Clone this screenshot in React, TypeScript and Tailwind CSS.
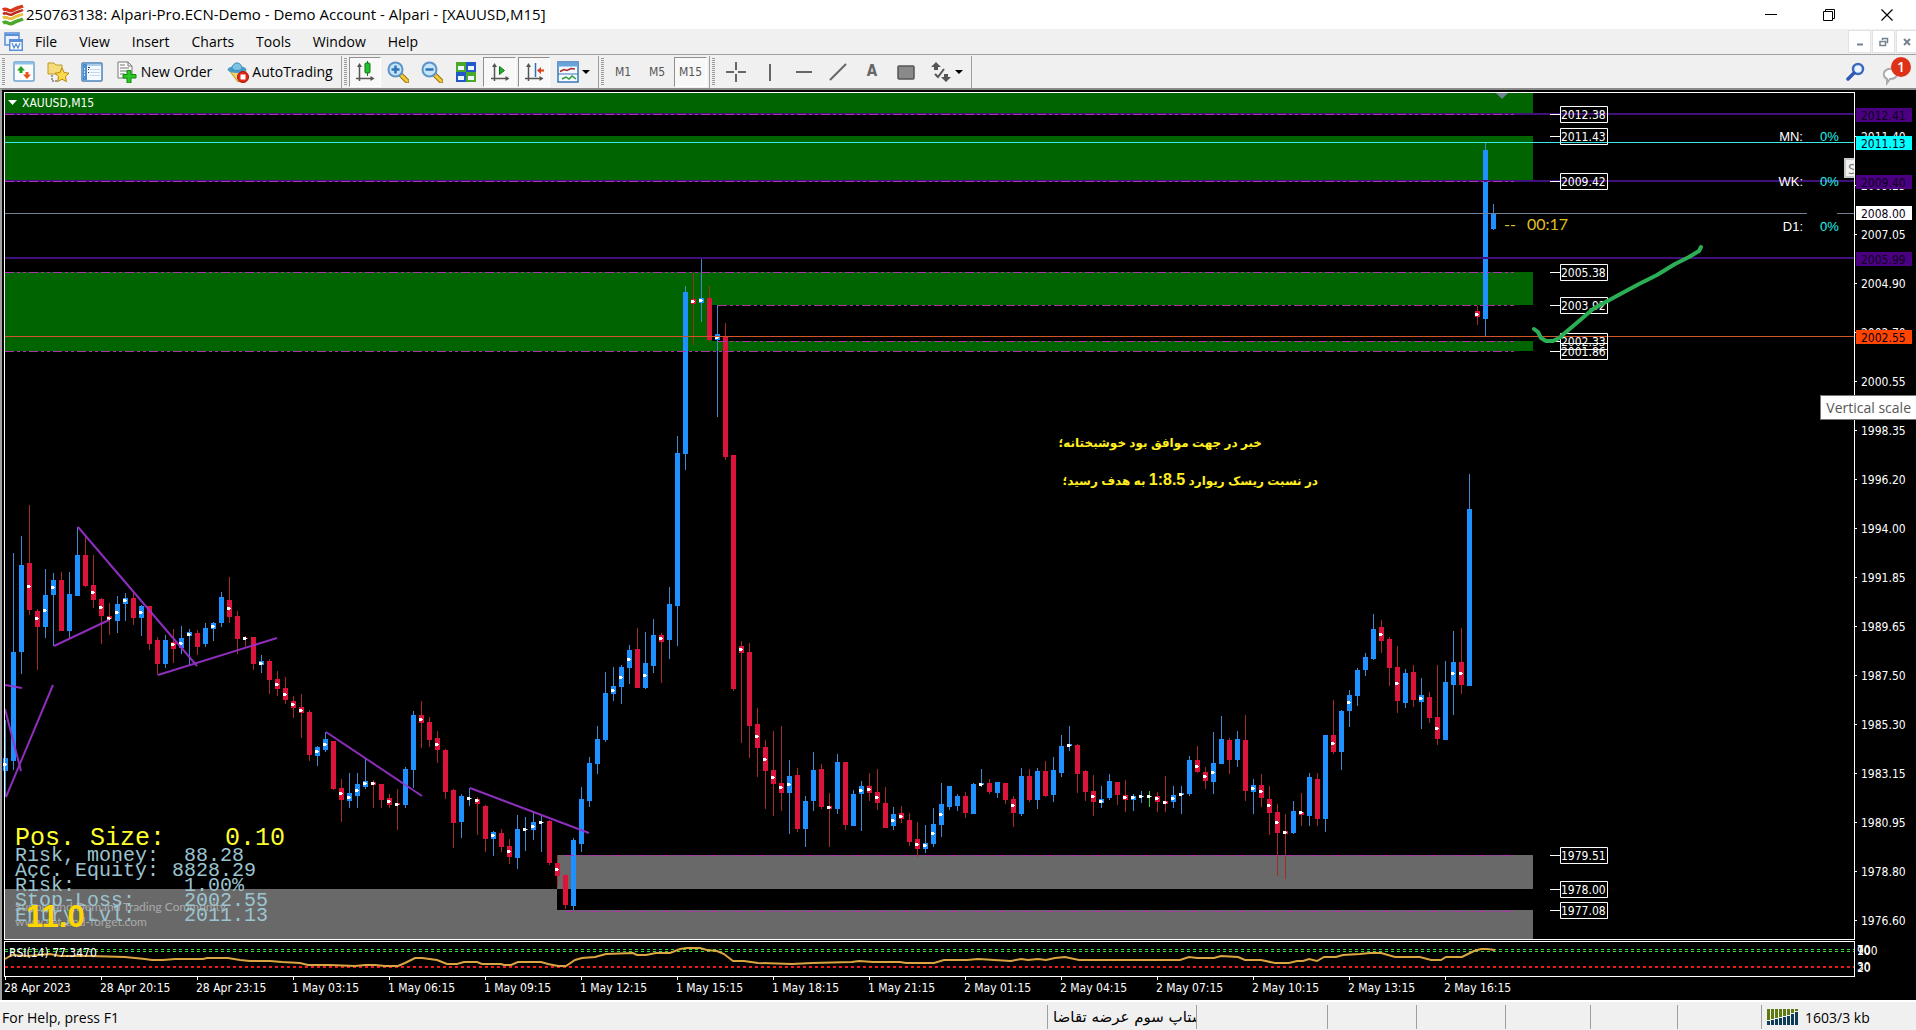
import type { ReactNode } from "react";

// [high, body top, body bottom, low, direction, marker y]
type Candle = [number, number, number, number, "u" | "d" | "n", number?];

const CANDLES: Candle[] = [
  [720, 758, 771, 797, "u", 764],
  [553, 652, 761, 770, "u"],
  [536, 565, 652, 674, "u"],
  [505, 563, 610, 615, "d", 586],
  [609, 611, 627, 670, "d", 618],
  [569, 595, 627, 638, "u", 610],
  [573, 580, 595, 646, "u", 587],
  [572, 580, 631, 631, "d"],
  [572, 594, 631, 638, "u"],
  [527, 555, 596, 596, "u"],
  [536, 555, 586, 587, "d"],
  [555, 585, 600, 608, "d", 592],
  [598, 599, 616, 644, "d", 607],
  [603, 616, 619, 635, "d", 618],
  [596, 604, 621, 633, "u", 612],
  [593, 598, 604, 621, "u", 600],
  [592, 598, 618, 625, "d"],
  [605, 606, 618, 636, "u", 612],
  [606, 606, 644, 650, "d"],
  [637, 640, 664, 675, "d"],
  [635, 640, 664, 668, "u"],
  [629, 642, 649, 663, "d", 644],
  [626, 638, 648, 654, "u", 643],
  [629, 632, 636, 665, "u", 634],
  [630, 633, 647, 655, "d"],
  [623, 628, 644, 647, "u"],
  [622, 623, 629, 641, "u", 626],
  [592, 597, 623, 627, "u"],
  [577, 600, 617, 623, "d", 608],
  [611, 616, 639, 654, "d"],
  [636, 638, 639, 647, "d", 638],
  [637, 637, 664, 670, "d"],
  [655, 661, 665, 673, "u", 663],
  [659, 661, 680, 694, "d"],
  [671, 679, 689, 696, "d", 684],
  [677, 688, 700, 704, "d", 694],
  [696, 701, 708, 718, "d", 704],
  [694, 707, 713, 738, "d", 710],
  [710, 712, 755, 761, "d"],
  [746, 747, 756, 766, "u", 751],
  [732, 739, 750, 752, "u", 744],
  [741, 741, 789, 790, "d"],
  [779, 788, 800, 822, "d", 793],
  [773, 793, 801, 808, "u", 797],
  [773, 784, 796, 808, "u", 790],
  [759, 781, 787, 789, "u", 783],
  [780, 782, 785, 808, "d", 783],
  [784, 784, 800, 808, "d"],
  [794, 798, 805, 808, "d", 801],
  [789, 803, 805, 830, "d", 804],
  [767, 769, 805, 808, "u"],
  [711, 715, 770, 788, "u"],
  [701, 715, 723, 748, "d", 719],
  [717, 722, 740, 747, "d"],
  [731, 738, 750, 763, "d", 744],
  [749, 750, 792, 799, "d"],
  [789, 790, 823, 848, "d"],
  [794, 796, 822, 838, "u"],
  [788, 798, 799, 806, "u", 798],
  [797, 799, 804, 835, "d", 800],
  [805, 806, 839, 852, "d"],
  [831, 832, 839, 856, "u", 835],
  [829, 833, 847, 852, "d"],
  [839, 846, 857, 864, "d", 851],
  [815, 829, 858, 869, "u"],
  [817, 829, 830, 851, "u", 829],
  [812, 822, 830, 840, "u", 826],
  [816, 822, 823, 852, "u", 822],
  [820, 821, 863, 865, "d"],
  [855, 863, 876, 887, "d", 869],
  [875, 875, 905, 909, "d"],
  [838, 840, 906, 910, "u"],
  [787, 799, 844, 852, "u"],
  [757, 763, 801, 807, "u"],
  [726, 739, 764, 774, "u"],
  [672, 693, 740, 742, "u"],
  [667, 686, 694, 701, "u", 690],
  [665, 667, 687, 704, "u", 677],
  [645, 650, 668, 684, "u", 659],
  [628, 649, 688, 688, "d"],
  [632, 663, 688, 689, "u", 675],
  [619, 635, 666, 673, "u"],
  [633, 635, 642, 683, "d", 638],
  [587, 604, 640, 659, "u"],
  [436, 453, 606, 646, "u"],
  [286, 292, 454, 470, "u"],
  [273, 299, 304, 345, "d", 301],
  [259, 298, 303, 322, "u", 300],
  [286, 298, 340, 342, "d"],
  [305, 334, 340, 417, "u", 337],
  [323, 336, 457, 460, "d"],
  [455, 455, 689, 691, "d"],
  [641, 646, 653, 743, "d", 649],
  [643, 652, 726, 758, "d"],
  [708, 724, 748, 777, "d", 736],
  [740, 747, 771, 809, "d", 759],
  [731, 770, 784, 816, "d", 777],
  [726, 783, 793, 811, "d", 787],
  [760, 776, 793, 834, "u", 784],
  [768, 775, 829, 832, "d"],
  [796, 801, 829, 847, "u"],
  [752, 770, 801, 811, "u"],
  [764, 769, 807, 809, "d"],
  [793, 806, 809, 847, "d", 807],
  [754, 762, 809, 814, "u"],
  [762, 762, 825, 830, "d"],
  [790, 794, 826, 826, "u"],
  [781, 786, 794, 831, "u", 790],
  [773, 786, 793, 801, "d", 789],
  [769, 792, 803, 810, "d", 797],
  [787, 803, 828, 828, "d"],
  [807, 814, 826, 830, "u", 820],
  [806, 813, 819, 823, "d", 816],
  [813, 820, 842, 846, "d"],
  [822, 839, 849, 857, "d", 844],
  [825, 843, 849, 853, "u", 845],
  [808, 824, 844, 847, "u", 833],
  [783, 804, 825, 837, "u", 814],
  [786, 786, 807, 810, "u"],
  [794, 796, 806, 811, "u"],
  [792, 796, 813, 818, "d"],
  [783, 784, 814, 814, "u"],
  [769, 783, 785, 787, "u", 784],
  [779, 783, 792, 794, "d"],
  [782, 782, 793, 798, "u"],
  [783, 783, 800, 804, "d"],
  [796, 799, 813, 827, "d", 805],
  [768, 776, 814, 816, "u"],
  [769, 776, 800, 802, "d"],
  [768, 771, 800, 809, "u"],
  [761, 771, 796, 797, "d"],
  [757, 770, 795, 802, "u"],
  [735, 746, 773, 777, "u"],
  [726, 744, 746, 751, "u", 745],
  [744, 745, 774, 793, "d"],
  [770, 771, 792, 801, "d"],
  [775, 791, 802, 816, "d", 796],
  [786, 799, 803, 808, "u", 801],
  [774, 781, 798, 800, "u"],
  [782, 782, 795, 805, "d"],
  [780, 795, 800, 812, "d", 797],
  [794, 796, 800, 811, "u", 797],
  [791, 796, 797, 803, "u", 796],
  [791, 796, 797, 807, "n", 796],
  [792, 796, 802, 812, "d", 798],
  [776, 801, 804, 812, "d", 802],
  [786, 795, 802, 808, "u", 798],
  [786, 793, 795, 814, "u", 794],
  [756, 760, 794, 796, "u"],
  [746, 760, 772, 773, "d", 766],
  [767, 772, 781, 789, "d", 776],
  [732, 763, 782, 794, "u", 772],
  [716, 739, 764, 764, "u"],
  [738, 740, 760, 774, "d"],
  [731, 739, 760, 767, "u"],
  [715, 740, 791, 801, "d"],
  [779, 785, 792, 814, "u", 788],
  [774, 785, 798, 807, "d", 791],
  [786, 799, 813, 835, "d", 805],
  [804, 812, 833, 876, "d", 822],
  [814, 831, 834, 879, "d", 832],
  [801, 811, 833, 834, "u"],
  [793, 812, 815, 826, "d", 812],
  [773, 777, 816, 826, "u"],
  [773, 779, 819, 826, "d"],
  [735, 735, 819, 832, "u"],
  [700, 735, 752, 754, "d", 743],
  [710, 711, 752, 770, "u"],
  [690, 695, 711, 727, "u", 702],
  [668, 670, 696, 706, "u"],
  [653, 657, 670, 676, "u"],
  [614, 629, 659, 660, "u"],
  [620, 627, 641, 653, "d", 634],
  [637, 639, 668, 686, "d"],
  [646, 667, 701, 713, "d", 683],
  [669, 673, 703, 708, "u"],
  [665, 672, 700, 707, "d"],
  [678, 695, 702, 729, "u", 698],
  [692, 697, 718, 723, "d"],
  [665, 717, 739, 745, "d", 728],
  [661, 682, 740, 740, "u"],
  [631, 662, 685, 715, "u", 673],
  [628, 662, 685, 694, "d", 673],
  [474, 509, 686, 686, "u"],
  [306, 311, 317, 325, "d", 314],
  [143, 150, 319, 336, "u"],
  [204, 213, 229, 230, "u"],
];

const BODY = { u: "#1e90ff", d: "#dc143c", n: "#32cd32" };
const WICK = { u: "#4287cf", d: "#a52a2a", n: "#32cd32" };

const ZONES = [
  { x: 5, y: 93, w: 1528, h: 20, fill: "#006400" },
  { x: 5, y: 136, w: 1528, h: 44, fill: "#006400" },
  { x: 5, y: 272, w: 707, h: 79, fill: "#006400" },
  { x: 712, y: 272, w: 821, h: 33, fill: "#006400" },
  { x: 712, y: 341, w: 821, h: 10, fill: "#006400" },
  { x: 5, y: 889, w: 552, h: 50, fill: "#696969" },
  { x: 557, y: 855, w: 976, h: 34, fill: "#696969" },
  { x: 557, y: 910, w: 976, h: 29, fill: "#696969" },
];

const LEVELS = [
  { x: 5, y: 114 },
  { x: 5, y: 181 },
  { x: 5, y: 272 },
  { x: 718, y: 305 },
  { x: 718, y: 341 },
  { x: 5, y: 351 },
  { x: 565, y: 855 },
  { x: 565, y: 911 },
];

const PRICE_BOXES: [string, number][] = [
  ["2012.38", 114],
  ["2011.43", 136],
  ["2009.42", 181],
  ["2005.38", 272],
  ["2003.92", 305],
  ["2002.33", 341],
  ["2001.86", 351],
  ["1979.51", 855],
  ["1978.00", 889],
  ["1977.08", 910],
];

const TREND_LINES = [
  "78,527 197,666",
  "54,646 109,620",
  "158,675 277,638",
  "5,685 22,688",
  "5,709 21,771",
  "6,797 53,685",
  "326,732 422,796",
  "470,788 589,833",
];

const SCALE = [
  "2011.40", "2009.25", "2007.05", "2004.90", "2002.70", "2000.55", "1998.35", "1996.20", "1994.00",
  "1991.85", "1989.65", "1987.50", "1985.30", "1983.15", "1980.95", "1978.80", "1976.60",
];

const TAGS = [
  { price: "2012.41", y: 115, bg: "#4b0082" },
  { price: "2011.13", y: 143, bg: "#00ffff" },
  { price: "2009.40", y: 182, bg: "#4b0082" },
  { price: "2008.00", y: 213, bg: "#ffffff" },
  { price: "2005.99", y: 259, bg: "#4b0082" },
  { price: "2002.55", y: 337, bg: "#ff4500" },
];

const TIMES = [
  "28 Apr 2023", "28 Apr 20:15", "28 Apr 23:15", "1 May 03:15", "1 May 06:15", "1 May 09:15",
  "1 May 12:15", "1 May 15:15", "1 May 18:15", "1 May 21:15", "2 May 01:15", "2 May 04:15",
  "2 May 07:15", "2 May 10:15", "2 May 13:15", "2 May 16:15",
];

const RSI =
  "5,959 12,955 28,956 50,954 60,956 90,956 125,957 145,959 152,960 163,960 175,959 203,959 207,958 228,958 240,960 250,961 270,961 282,962 300,963 308,965 330,965 355,966 365,965 375,965 385,966 398,966 405,963 415,958 422,958 437,960 447,964 457,964 464,962 477,962 482,964 501,964 504,965 511,965 518,962 541,962 548,964 558,966 566,966 575,960 582,958 595,957 606,954 633,953 637,955 646,955 656,953 670,953 680,949 687,948 700,948 707,950 717,951 724,954 733,961 744,961 758,963 792,964 812,963 852,962 859,961 873,962 900,962 906,963 934,963 944,960 967,960 978,959 1011,961 1021,959 1028,960 1038,959 1046,960 1055,958 1065,957 1079,960 1180,960 1189,957 1197,958 1214,958 1221,956 1238,957 1245,960 1261,960 1275,963 1289,963 1297,961 1303,961 1309,959 1317,961 1324,957 1336,957 1343,955 1360,954 1370,953 1381,953 1395,957 1420,957 1431,960 1441,960 1446,957 1462,957 1474,951 1481,949 1487,949 1495,950";

const INFO: [string, string, number, number][] = [
  ["Risk, money:", "88.28", 184, 861],
  ["Acc. Equity:", "8828.29", 172, 876],
  ["Risk:", "1.00%", 184, 891],
  ["Stop-Loss:", "2002.55", 184, 906],
  ["Entry Lvl:", "2011.13", 184, 921],
];

const LABEL = "font-['DejaVu_Sans_Condensed','DejaVu_Sans',sans-serif] text-[12px]";

function Candles() {
  return (
    <g shapeRendering="crispEdges">
      {CANDLES.map(([high, top, bottom, low, dir, dot], i) => {
        const x = 5 + i * 8;
        return (
          <g key={i}>
            <rect x={x} y={high} width={1} height={Math.max(low - high, 1)} fill={WICK[dir]} />
            <rect x={x - 2} y={top} width={5} height={bottom - top} fill={BODY[dir]} />
            {dot && (
              <>
                <rect x={x - 2} y={dot - 1} width={3} height={3} fill="#fff" />
                <rect x={x - 2} y={dot} width={4} height={1} fill="#fff" />
              </>
            )}
          </g>
        );
      })}
    </g>
  );
}

function Plot() {
  return (
    <svg className="h-full min-w-0 flex-1" role="img" aria-label="XAUUSD M15 candlestick chart">
      <g transform="translate(-2,-90)">
        <g shapeRendering="crispEdges">
          {ZONES.map((z, i) => (
            <rect key={i} x={z.x} y={z.y} width={z.w} height={z.h} fill={z.fill} />
          ))}
        </g>

        {/* Watermark */}
        <g className="font-['Lato',sans-serif] text-[12px]" fill="#a9a9a9">
          <text x={15} y={911}>Supply and Demand Trading Community</text>
          <text x={15} y={926}>www.set-and-forget.com</text>
        </g>

        <Candles />

        <g stroke="#9932cc" strokeWidth={2} opacity={0.92}>
          {TREND_LINES.map((points) => (
            <polyline key={points} points={points} />
          ))}
        </g>

        {/* Horizontal price lines */}
        <g shapeRendering="crispEdges">
          {[113, 180, 257].map((y) => (
            <rect key={y} x={5} y={y} width="100%" height={2} fill="#42107a" />
          ))}
          {LEVELS.map((l) => (
            <line key={l.y} x1={l.x} x2={1514} y1={l.y + 0.5} y2={l.y + 0.5} stroke="#b030b0" strokeDasharray="9 3 3 3 3 3" />
          ))}
          <rect x={5} y={142} width="100%" height={1} fill="#38ece4" />
          <rect x={5} y={213} width={1802} height={1} fill="#708090" />
          <rect x={1837} y={213} width={100} height={1} fill="#708090" />
          <rect x={5} y={336} width="100%" height={1} fill="#d2552a" />
        </g>
        <path d="M1496 93h12l-6 6z" fill="#708090" />

        {/* Price labels */}
        <g className={LABEL} fill="#fff">
          {PRICE_BOXES.map(([price, y]) => (
            <g key={price}>
              <path d={`M1550 ${y + 0.5}h10M1560.5 ${y - 7.5}h47v16h-47z`} fill="none" stroke="#fff" />
              <text x={1561} y={y + 5}>{price}</text>
            </g>
          ))}
        </g>

        <g className="font-['Liberation_Sans',sans-serif] text-[13px]">
          {[["MN:", 141], ["WK:", 186], ["D1:", 231]].map(([name, y]) => (
            <g key={name}>
              <text x={1803} y={y} textAnchor="end" fill="#fff">{name}</text>
              <text x={1820} y={y} fill="#20f4ec">0%</text>
            </g>
          ))}
        </g>

        <g className="font-['Lato',sans-serif] text-[16px]" fill="#e0c020">
          <text x={1504} y={230}>--</text>
          <text x={1527} y={230}>00:17</text>
        </g>

        <path
          d="M1534 329l4 3 3 6 5 3h7l6-3 20-17 14-12 20-11 26-14 18-9 18-11 14-7 10-6 2-4"
          fill="none"
          stroke="#2bae54"
          strokeWidth={4}
          strokeLinecap="round"
          strokeLinejoin="round"
        />

        <g className="font-['Liberation_Sans','DejaVu_Sans',sans-serif] text-[12px] font-bold" fill="#ffee20" direction="rtl">
          <text x={1262} y={447}>خبر در جهت موافق بود خوشبختانه؛</text>
          <text x={1318} y={485}>
            در نسبت ریسک ریوارد <tspan className="text-[16px]">1:8.5</tspan> به هدف رسید؛
          </text>
        </g>

        {/* Position size panel */}
        <g className="font-['Liberation_Mono',monospace]">
          <g className="text-[25px]" fill="#ffff30">
            <text x={15} y={845}>Pos. Size:</text>
            <text x={225} y={845}>0.10</text>
          </g>
          <g className="text-[20px]" fill="#9cc4d0">
            {INFO.map(([name, value, x, y]) => (
              <g key={name}>
                <text x={15} y={y}>{name}</text>
                <text x={x} y={y}>{value}</text>
              </g>
            ))}
          </g>
        </g>
        <text x={26} y={927} className="font-['Liberation_Sans',sans-serif] text-[31px] font-bold" fill="#ffd700">11.0</text>

        <path d="M8 100h9l-4.5 5z" fill="#fff" />
        <text x={22} y={107} className={LABEL} fill="#fff">XAUUSD,M15</text>

        {/* RSI window */}
        <g shapeRendering="crispEdges">
          <path d="M5 949.5H1900M5 951.5H1900" stroke="#3cdc3c" strokeDasharray="3 3" />
          <path d="M5 967H1900" stroke="#f01818" strokeWidth={2} strokeDasharray="3 3" />
        </g>
        <polyline points={RSI} fill="none" stroke="#daa540" strokeWidth={2} />
        <text x={9} y={957} className={LABEL} fill="#fff">RSI(14) 77.3470</text>

        {/* Window frames */}
        <g fill="#fff" shapeRendering="crispEdges">
          <rect x={4} y={92} width="100%" height={1} />
          <rect x={4} y={92} width={1} height={848} />
          <rect x={4} y={939} width="100%" height={1} />
          <rect x={4} y={941} width="100%" height={1} />
          <rect x={4} y={941} width={1} height={36} />
          <rect x={4} y={976} width="100%" height={1} />
        </g>

        <g className={LABEL} fill="#fff">
          {TIMES.map((time, i) => (
            <g key={time}>
              <rect x={5 + i * 96} y={977} width={1} height={3} />
              <text x={4 + i * 96} y={992}>{time}</text>
            </g>
          ))}
        </g>
      </g>
    </svg>
  );
}

function PriceScale() {
  return (
    <svg className="h-full w-[62px] shrink-0" role="img" aria-label="Vertical scale">
      <g transform="translate(-1854,-90)" className={LABEL} fill="#fff">
        <path d="M1854.5 92V940M1854.5 941V977" stroke="#fff" />
        {SCALE.map((price, i) => (
          <g key={price}>
            <rect x={1855} y={136 + i * 49} width={2} height={1} />
            <text x={1861} y={141 + i * 49}>{price}</text>
          </g>
        ))}
        {TAGS.map((tag) => (
          <g key={tag.price}>
            <rect x={1856} y={tag.y - 7} width={56} height={14} fill={tag.bg} />
            <text x={1861} y={tag.y + 5} fill="#0c0018">{tag.price}</text>
          </g>
        ))}
        <text x={1857} y={955}>100</text>
        <text x={1857} y={955}>90</text>
        <text x={1857} y={954}>70</text>
        <text x={1857} y={971}>30</text>
        <text x={1857} y={972}>20</text>
      </g>
    </svg>
  );
}

function Grip() {
  return <span className="mx-[2px] h-[28px] w-[3px] shrink-0 bg-[repeating-linear-gradient(#9a9a9a_0_1px,#f0f0f0_1px_2px)]" />;
}

function Divider() {
  return <span className="h-[32px] w-px shrink-0 bg-[#a0a0a0]" />;
}

function Tool({ label, pressed, className = "w-[34px]", children }: { label: string; pressed?: boolean; className?: string; children: ReactNode }) {
  return (
    <button
      type="button"
      aria-label={label}
      aria-pressed={pressed}
      className={`flex h-[30px] shrink-0 items-center justify-center gap-[3px] border ${pressed ? "border-t-[#909090] border-r-white border-b-white border-l-[#909090] bg-[#f8f8f8]" : "border-transparent"} ${className}`}
    >
      {children}
    </button>
  );
}

function Icon({ children, size = 22 }: { children: ReactNode; size?: number }) {
  return (
    <svg width={size} height={size} viewBox={`0 0 ${size} ${size}`} fill="none" className="shrink-0" aria-hidden="true">
      {children}
    </svg>
  );
}

function Magnifier({ plus }: { plus?: boolean }) {
  return (
    <Icon>
      <path d="M14 14l6 6" stroke="#9a7410" strokeWidth={5} strokeLinecap="round" />
      <path d="M14 14l6 6" stroke="#f0c838" strokeWidth={3} strokeLinecap="round" />
      <circle cx={8.5} cy={8.5} r={7} fill="#c5e6fa" stroke="#5b94c8" strokeWidth={2} />
      <path d={plus ? "M4.5 8.5h8M8.5 4.5v8" : "M4.5 8.5h8"} stroke="#2f72b5" strokeWidth={2.5} />
    </Icon>
  );
}

function Axes({ children }: { children?: ReactNode }) {
  return (
    <Icon>
      <path d="M5.5 4v16M2 17.5h17" stroke="#555" strokeWidth={1.5} />
      <path d="M3 6l2.500-4L8 6zM16.500 15l4 2.500-4 2.500z" fill="#555" />
      {children}
    </Icon>
  );
}

function Caret() {
  return (
    <Icon size={8}>
      <path d="M0 2h8L4 6z" fill="#000" />
    </Icon>
  );
}

function Toolbar() {
  return (
    <div className="flex h-[34px] shrink-0 items-center border-t border-t-[#a0a0a0] bg-[#f0f0f0] text-[14px]">
      <Grip />
      <Tool label="New chart">
        <Icon>
          <rect x={1} y={1} width={20} height={19} rx={1} fill="#fdfdfd" stroke="#6aa0d0" strokeWidth={1.5} />
          <path d="M1 2.5h20" stroke="#8fc0e8" strokeWidth={2} />
          <path d="M4 9.5L8 5l4 4.5H9.5V12h-3V9.5z" fill="#23a31c" />
          <path d="M10 13.5l4 4.5 4-4.5h-2.5V11h-3v2.5z" fill="#e8551c" />
        </Icon>
      </Tool>
      <Tool label="Profiles">
        <Icon>
          <path d="M1 2h6l2 2h6v9H1z" fill="#f5dc7a" stroke="#c09a28" />
          <path d="M5 14v6h6" stroke="#444" strokeDasharray="2 1" />
          <path d="M15 7l2.200 4.600 4.800.6-3.500 3.400.9 5-4.400-2.400-4.400 2.400.9-5L8 12.200l4.800-.6z" fill="#fbd94a" stroke="#b88710" />
        </Icon>
      </Tool>
      <Tool label="Market watch">
        <Icon>
          <rect x={1} y={2} width={20} height={18} rx={1} fill="#f4faff" stroke="#4a82b8" strokeWidth={1.5} />
          <path d="M2 4h18" stroke="#a8ccec" strokeWidth={2} />
          <rect x={2} y={3} width={4} height={16} fill="#4a8fd4" />
          <path d="M3 8h1M3 11h1M3 14h1" stroke="#fff" strokeWidth={1.5} />
          <path d="M9 8.5h10M9 11.5h10M9 14.5h10" stroke="#c4d8ec" />
          <path d="M7 6.5h2M7 8.5h1M7 11.5h1" stroke="#2a3a50" />
        </Icon>
      </Tool>
      <Tool label="New Order" className="w-[110px]">
        <Icon>
          <path d="M2 1h10l4 4v12H2z" fill="#fdfdfd" stroke="#777" />
          <path d="M12 1v4h4M4 4h5M4 7h9M4 10h9M4 13h5" stroke="#777" />
          <path d="M11 22v-5H7v-3.5h4V9.5h4v4h5V17h-5v5z" fill="#2dc626" stroke="#0f8a0c" />
        </Icon>
        <span className="whitespace-nowrap">New Order</span>
      </Tool>
      <Tool label="AutoTrading" className="w-[122px]">
        <Icon>
          <path d="M2 9l17 1-2 9-6 2z" fill="#f2d466" stroke="#b8932a" />
          <ellipse cx={10} cy={8.5} rx={9.5} ry={3.5} fill="#4a9cc8" />
          <path d="M5 8c0-8 10-8 10 0-3 2-7 2-10 0z" fill="#7cc4e4" stroke="#3a86b0" />
          <circle cx={16} cy={16} r={5.5} fill="#e02a18" stroke="#a81408" />
          <rect x={13.5} y={13.5} width={5} height={5} fill="#fff" />
        </Icon>
        <span className="whitespace-nowrap">AutoTrading</span>
      </Tool>
      <Divider />
      <Grip />
      <Tool label="Candlesticks" pressed className="w-[32px]">
        <Axes>
          <path d="M13.5 0v15" stroke="#0b7a12" />
          <rect x={11} y={2} width={5} height={10} rx={1} fill="#22c02c" stroke="#0b7a12" />
        </Axes>
      </Tool>
      <Tool label="Zoom in"><Magnifier plus /></Tool>
      <Tool label="Zoom out"><Magnifier /></Tool>
      <Tool label="Tile windows">
        <Icon>
          <rect x={1} y={1} width={10} height={10} fill="#4aa82a" />
          <rect x={11} y={1} width={10} height={10} fill="#2458c8" />
          <rect x={1} y={11} width={10} height={10} fill="#2458c8" />
          <rect x={11} y={11} width={10} height={10} fill="#4aa82a" />
          <path d="M3 5h6v4H3zM13 5h6v4h-6zM3 15h6v4H3zM13 15h6v4h-6z" fill="#eef6ff" />
        </Icon>
      </Tool>
      <Tool label="Auto scroll" pressed className="w-[33px]">
        <Axes>
          <path d="M10.5 5.5v8l5-4z" fill="#22b02c" stroke="#0b7a12" />
        </Axes>
      </Tool>
      <Tool label="Chart shift" pressed className="ml-[2px] w-[32px]">
        <Axes>
          <path d="M12.5 2v14" stroke="#2f72b5" strokeWidth={1.5} />
          <path d="M14 9.5l4-3.5v2.5h3v2h-3V13z" fill="#d8401c" />
        </Axes>
      </Tool>
      <Tool label="Templates" className="w-[46px]">
        <Icon>
          <rect x={1} y={1} width={20} height={20} fill="#f4faff" stroke="#3b78b8" strokeWidth={1.5} />
          <path d="M1 3.5h20" stroke="#6aa4dc" strokeWidth={4} />
          <path d="M1 13h20" stroke="#3b78b8" />
          <path d="M3 10.5l4-2 3 1 4-2 4 .5" stroke="#a82a20" strokeWidth={1.5} />
          <path d="M5 18l4-2 3 2 3-3 4 3" stroke="#2a9a3a" strokeWidth={1.5} />
        </Icon>
        <Caret />
      </Tool>
      <span className="w-[2px] shrink-0" />
      <Divider />
      <Grip />
      <div className="flex font-['DejaVu_Sans_Condensed','DejaVu_Sans',sans-serif] text-[12px] text-[#555]">
        <Tool label="M1">M1</Tool>
        <Tool label="M5">M5</Tool>
        <Tool label="M15" pressed className="w-[33px]">M15</Tool>
      </div>
      <span className="w-[2px] shrink-0" />
      <Divider />
      <Grip />
      <div className="flex items-center pl-[2px]">
        <Tool label="Crosshair"><Icon><path d="M11 1v8M11 13v8M1 11h8M13 11h8" stroke="#666" strokeWidth={2} /></Icon></Tool>
        <Tool label="Vertical line"><Icon><path d="M11 3v17" stroke="#666" strokeWidth={2} /></Icon></Tool>
        <Tool label="Horizontal line"><Icon><path d="M3 11h16" stroke="#666" strokeWidth={2} /></Icon></Tool>
        <Tool label="Trend line"><Icon><path d="M3 19L19 3" stroke="#666" strokeWidth={2} /></Icon></Tool>
        <Tool label="Text">
          <span className="font-['DejaVu_Sans_Condensed','DejaVu_Sans',sans-serif] text-[15px] font-bold text-[#666]">A</span>
        </Tool>
        <Tool label="Rectangle">
          <Icon><rect x={3} y={5} width={16} height={13} rx={1} fill="#8a8a8a" stroke="#555" strokeWidth={1.5} /></Icon>
        </Tool>
        <Tool label="Arrows" className="w-[46px]">
          <Icon>
            <path d="M1 6l5-5 5 5H8v3H4V6zM11 16l5 5 5-5h-3v-3h-4v3z" fill="#555" />
            <path d="M5 13l3 3 6-8" stroke="#555" strokeWidth={2} />
          </Icon>
          <Caret />
        </Tool>
      </div>
      <span className="w-[2px] shrink-0" />
      <Divider />
      <div className="ml-auto flex items-center gap-[12px]">
        <Tool label="Search" className="w-[24px]">
          <Icon size={20}>
            <circle cx={12} cy={7} r={5} fill="#eaf4ff" stroke="#3a6ac0" strokeWidth={2.5} />
            <path d="M8 11l-6 6" stroke="#2f5ab0" strokeWidth={3.5} strokeLinecap="round" />
          </Icon>
        </Tool>
        <button type="button" aria-label="Notifications" className="relative h-[30px] w-[36px]">
          <Icon size={28}>
            <path d="M5 13c3-3 11-3 12 1 1 5-3 7-7 7l-3 4v-4c-4-2-4-6-2-8z" fill="#fff" stroke="#aaa" strokeWidth={2} />
          </Icon>
          <span className="absolute top-0 right-[5px] flex size-[20px] items-center justify-center rounded-full bg-[#de3218] text-[14px] font-semibold text-white">1</span>
        </button>
      </div>
    </div>
  );
}

function TitleBar() {
  return (
    <header className="flex h-[29px] shrink-0 items-center bg-white">
      <div className="flex w-[26px] shrink-0 justify-center">
        <Icon size={22}>
          <path d="M1 6c4-3 6 3 10 0s6-2 10-4" stroke="#d8371c" strokeWidth={3.5} />
          <path d="M1 10c4-3 6 3 10 0s6-2 10-4" stroke="#b82a20" strokeWidth={2.5} />
          <path d="M1 14c4-3 6 3 10 0s6-2 10-4" stroke="#e8c040" strokeWidth={3} />
          <path d="M1 19c4-3 6 3 10 0s6-2 10-4" stroke="#4aa82a" strokeWidth={3.5} />
        </Icon>
      </div>
      <h1 className="text-[15px] whitespace-nowrap">250763138: Alpari-Pro.ECN-Demo - Demo Account - Alpari - [XAUUSD,M15]</h1>
      <div className="ml-auto flex">
        <button type="button" aria-label="Minimize" className="flex h-[29px] w-[58px] items-center justify-center">
          <Icon size={14}><path d="M1 6.5h12" stroke="#000" /></Icon>
        </button>
        <button type="button" aria-label="Restore" className="flex h-[29px] w-[58px] items-center justify-center">
          <Icon size={14}><path d="M1.5 3.5h9v9h-9zM3.5 3.5v-2h9v9h-2" stroke="#000" /></Icon>
        </button>
        <button type="button" aria-label="Close" className="flex h-[29px] w-[58px] items-center justify-center">
          <Icon size={14}><path d="M1.5 1.5l11 11M12.5 1.5l-11 11" stroke="#000" strokeWidth={1.2} /></Icon>
        </button>
      </div>
    </header>
  );
}

function MenuBar() {
  return (
    <nav className="flex h-[25px] shrink-0 items-center bg-[#f0f0f0] text-[14px]">
      <div className="flex w-[24px] shrink-0 justify-end">
        <Icon size={20}>
          <rect x={1} y={1} width={14} height={12} fill="#eaf2ff" stroke="#5a8fd8" strokeWidth={1.5} />
          <rect x={5} y={7} width={14} height={12} fill="#5a8fd8" />
          <path d="M1 3h14" stroke="#5a8fd8" strokeWidth={2} />
          <rect x={6.5} y={10} width={11} height={7.5} fill="#fff" />
          <path d="M8 11l2 5 2-4 2 4 2-5" stroke="#5a8fd8" strokeWidth={1.3} />
        </Icon>
      </div>
      {["File", "View", "Insert", "Charts", "Tools", "Window", "Help"].map((item) => (
        <button key={item} type="button" className="px-[11px]">{item}</button>
      ))}
      <div className="ml-auto flex gap-px">
        <button type="button" aria-label="Minimize chart" className="flex size-[23px] items-center justify-center border border-[#e2e2e2] bg-white">
          <Icon size={10}><path d="M2 7.5h6" stroke="#76828e" strokeWidth={2} /></Icon>
        </button>
        <button type="button" aria-label="Restore chart" className="flex size-[23px] items-center justify-center border border-[#e2e2e2] bg-white">
          <Icon size={10}><path d="M1 4.5h5.5v4H1zM3.5 3V1.5h5v4h-1" stroke="#76828e" strokeWidth={1.5} /></Icon>
        </button>
        <button type="button" aria-label="Close chart" className="flex h-[23px] w-[20px] items-center justify-center border border-r-0 border-[#e2e2e2] bg-white">
          <Icon size={10}><path d="M2 2l6 6M8 2L2 8" stroke="#76828e" strokeWidth={2} /></Icon>
        </button>
      </div>
    </nav>
  );
}

function StatusBar() {
  return (
    <footer className="flex h-[30px] shrink-0 items-center border-t-2 border-t-white bg-[#f0f0f0] pt-[2px] text-[14px]">
      <span className="flex-1 pl-[2px]">For Help, press F1</span>
      <span className="h-[24px] w-[149px] overflow-hidden border-l border-l-[#a0a0a0] pl-[5px] font-['DejaVu_Sans',sans-serif] text-[15px] leading-6 whitespace-nowrap">
        ستاپ سوم عرضه تقاضا
      </span>
      <span className="h-[24px] w-[131px] border-l border-l-[#a0a0a0]" />
      <span className="h-[24px] w-[89px] border-l border-l-[#a0a0a0]" />
      <span className="h-[24px] w-[89px] border-l border-l-[#a0a0a0]" />
      <span className="h-[24px] w-[85px] border-l border-l-[#a0a0a0]" />
      <span className="h-[24px] w-[87px] border-l border-l-[#a0a0a0]" />
      <span className="h-[24px] w-[84px] border-l border-l-[#a0a0a0]" />
      <span className="flex h-[24px] w-[155px] items-center gap-[6px] border-l border-l-[#a0a0a0] pl-[5px]">
        <svg width={32} height={16} shapeRendering="crispEdges" aria-hidden="true">
          {[12, 11, 10, 9, 8, 7, 5, 3].map((h, i) => (
            <g key={i}>
              <rect x={i * 4} y={0} width={3} height={h - 1} fill="#5f7a10" />
              <rect x={i * 4} y={h} width={3} height={16 - h} fill="#0c3c58" />
            </g>
          ))}
        </svg>
        1603/3 kb
      </span>
    </footer>
  );
}

export default function App() {
  return (
    <div className="flex h-screen flex-col overflow-hidden bg-[#f0f0f0] font-['Open_Sans','Noto_Sans',sans-serif] text-black">
      <TitleBar />
      <MenuBar />
      <Toolbar />
      <main className="relative flex min-h-0 flex-1 border-t-2 border-l-2 border-t-[#8a8a8a] border-l-[#a0a0a0] bg-black">
        <Plot />
        <PriceScale />
        <div className="absolute top-[68px] right-[62px] h-[20px] w-[10px] overflow-hidden border-2 border-r-0 border-[#c8c8c8] bg-[#f0f0f0] pl-[2px] text-[15px] leading-4 text-[#777]">S</div>
        <div className="absolute top-[305px] right-0 border border-r-0 border-[#767676] bg-white px-[5px] text-[14px] leading-[23px] text-[#575757]">
          Vertical scale
        </div>
      </main>
      <StatusBar />
    </div>
  );
}
